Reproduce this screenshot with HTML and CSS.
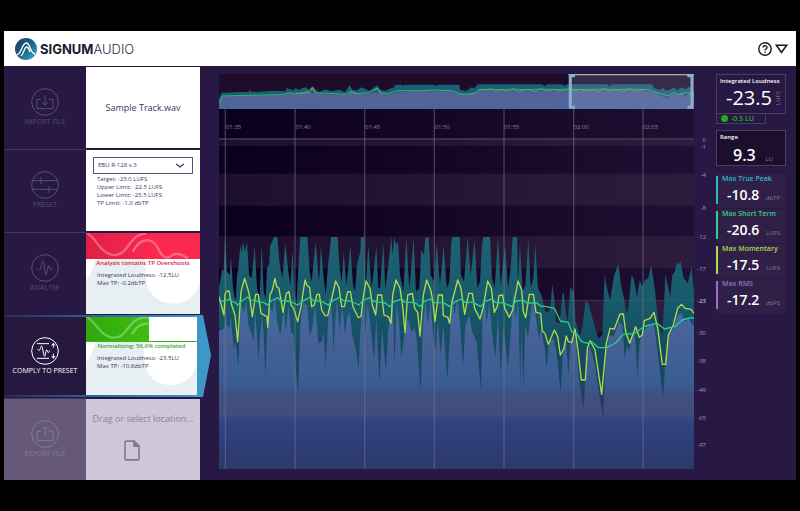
FILE: index.html
```html
<!DOCTYPE html>
<html lang="en">
<head>
<meta charset="utf-8">
<meta name="viewport" content="width=device-width, initial-scale=1">
<title>Signum Audio</title>
<link rel="stylesheet" href="styles.css">
</head>
<body>
<div class="app">
  <header class="header">
    <div class="brand">
      <svg class="brand-mark" viewBox="0 0 66 66" aria-hidden="true">
        <defs><linearGradient id="mark" x1="0" y1="0" x2="1" y2="1"><stop offset="0" stop-color="#173f63"/><stop offset=".5" stop-color="#1c5f88"/><stop offset="1" stop-color="#45b5cd"/></linearGradient></defs>
        <circle cx="33" cy="33" r="33" fill="url(#mark)"/>
        <path d="M5 50C20 50 20 15 34 15C46 15 44 44 60 48" fill="none" stroke="#fff" stroke-width="4"/>
        <path d="M17 54C27 50 27 27 35 27C41 27 42 36 45 42" fill="none" stroke="#fff" stroke-width="4"/>
      </svg>
      <span class="brand-name"><b>SIGNUM</b>AUDIO</span>
    </div>
    <div class="header-actions">
      <button class="icon-button" type="button" aria-label="Help"><svg class="help-icon" viewBox="0 0 14 14"><circle cx="7" cy="7" r="6.2"/><path d="M5 5.6C5 3.2 9 3.2 9 5.5C9 7 7 7 7 8.6M7 9.7V11"/></svg></button>
      <button class="icon-button" type="button" aria-label="Menu"><svg class="menu-icon" viewBox="0 0 12 9"><path d="M1.2 1H10.8L6 7.6Z"/></svg></button>
    </div>
  </header>

  <main class="main">
    <section class="steps">
      <div class="step">
        <button class="step-button" type="button">
          <svg class="step-icon" viewBox="0 0 84 84"><circle cx="42" cy="42" r="40"/><path d="M30 34H18V62H66V34H54M42 22V51M33 42L42 51L51 42"/></svg>
          <span>IMPORT FILE</span>
        </button>
        <div class="card card-file">Sample Track.wav</div>
      </div>

      <div class="step">
        <button class="step-button" type="button">
          <svg class="step-icon" viewBox="0 0 84 84"><circle cx="42" cy="42" r="40"/><path d="M4 29H80M4 55H80M30 19V39M54 45V65"/></svg>
          <span>PRESET</span>
        </button>
        <div class="card card-preset">
          <div class="select-wrap">
            <select class="select" aria-label="Preset"><option>EBU R-128 v.3</option></select>
            <svg class="chevron" viewBox="0 0 10 5" aria-hidden="true"><path d="M1 1Q4 3.2 5 4Q6 3.2 9 1"/></svg>
          </div>
          <p class="lines">Target: -23.0 LUFS<br>Upper Limit: -22.5 LUFS<br>Lower Limit: -23.5 LUFS<br>TP Limit: -1.0 dbTP</p>
        </div>
      </div>

      <div class="step">
        <button class="step-button" type="button">
          <svg class="step-icon" viewBox="0 0 84 84"><circle cx="42" cy="42" r="40"/><path d="M20 44C24 50 27 50 29 42C34 16 36 14 39 30L42 53C44 68 46 68 49 50C52 30 54 30 57 44C59 51 61 48 63 42"/></svg>
          <span>ANALYSE</span>
        </button>
        <div class="card card-status">
          <svg class="swirl" viewBox="0 0 342 243" preserveAspectRatio="none" aria-hidden="true"><path d="M0 0H342V243H0Z" fill="#e7eff3"/><path d="M0 0H34C34 80 20 125 0 140ZM170 0H342V150C325 195 300 212 262 212C215 212 180 180 180 130Z" fill="#fff"/></svg>
          <svg class="banner banner-error" viewBox="0 0 342 78" preserveAspectRatio="none" aria-hidden="true"><path d="M2 0C28 10 44 66 86 66C130 66 126 4 180 2M140 56C156 30 168 20 188 22C222 28 214 72 246 74C262 68 264 50 306 76"/></svg>
          <p class="status status-error">Analysis contains TP Overshoots</p>
          <p class="lines">Integrated Loudness: -12.5LU<br>Max TP: -0.2dbTP</p>
        </div>
      </div>

      <div class="step step-active">
        <button class="step-button" type="button" aria-current="step">
          <svg class="step-icon" viewBox="0 0 84 84"><circle cx="42" cy="42" r="40"/><path d="M18 20H54M18 64H54M20 36C24 42 26 42 28 34C31 24 33 24 35 36L38 50C40 62 42 60 44 48C46 36 48 36 50 44C51 48 54 48 56 40M67 20V32M62 26L67 19L72 26M67 50V63M62 57L67 64L72 57"/></svg>
          <span>COMPLY TO PRESET</span>
        </button>
        <div class="card card-status">
          <svg class="swirl" viewBox="0 0 342 243" preserveAspectRatio="none" aria-hidden="true"><path d="M0 0H342V243H0Z" fill="#e7eff3"/><path d="M0 0H34C34 80 20 125 0 140ZM170 0H342V150C325 195 300 212 262 212C215 212 180 180 180 130Z" fill="#fff"/></svg>
          <div class="progress" role="progressbar" aria-label="Normalising" aria-valuenow="56.6" aria-valuemin="0" aria-valuemax="100">
            <div class="progress-fill" style="width:56.6%"><svg class="banner" viewBox="0 0 192 72" preserveAspectRatio="none" aria-hidden="true"><path d="M2 0C28 10 44 62 86 62C130 62 126 4 180 2L192 2M140 52C156 26 168 20 192 19"/></svg></div>
          </div>
          <p class="status status-ok">Normalising: 56.6% completed</p>
          <p class="lines">Integrated Loudness: -23.5LU<br>Max TP: -10.8dbTP</p>
        </div>
      </div>

      <div class="step step-disabled">
        <button class="step-button" type="button">
          <svg class="step-icon" viewBox="0 0 84 84"><circle cx="42" cy="42" r="40"/><path d="M30 34H18V62H66V34H54M42 48V19M33 28L42 19L51 28"/></svg>
          <span>EXPORT FILE</span>
        </button>
        <div class="card card-export">
          <span>Drag or select location...</span>
          <svg class="doc-icon" viewBox="0 0 48 62" aria-hidden="true"><path d="M8 3H30L45 18V54Q45 59 40 59H8Q3 59 3 54V8Q3 3 8 3Z"/><path d="M30 3V18H45Z" fill="#85799b"/></svg>
        </div>
      </div>
    </section>

    <section class="analysis">
      <div class="graph">
        <svg class="overview" viewBox="0 30 1425 105" preserveAspectRatio="none" role="img" aria-label="Track overview">
          <defs><linearGradient id="ovb" x1="0" y1="0" x2="0" y2="1"><stop offset="0" stop-color="#54619b"/><stop offset="1" stop-color="#4d6799"/></linearGradient></defs>
          <path d="M0 30H1425V135H0Z" fill="#1d0d2b"/>
          <path fill="#176075" d="M0 135V104L8 86L60 84L88 84L92 78L98 84L140 82L160 80L200 82L202 72L214 76L222 79L230 72L240 78L250 72L262 70L270 80L280 66L292 78L300 84L320 76L336 82L360 77L378 84L384 76L392 64L400 77L415 79L426 70L440 76L452 80L466 70L476 64L484 78L500 80L512 74L526 70L528 62H548L552 66L556 62H645L650 66L655 62H720L724 78L744 80L756 70L764 73L772 66L776 61H970L976 67L984 61H1030L1036 65L1044 61H1166L1171 68L1178 61H1298L1306 72L1322 78L1332 72L1342 80L1356 76L1362 70L1376 78L1386 70L1400 76L1410 68L1425 82V135Z"/>
          <path fill="url(#ovb)" d="M0 135V110L14 97L190 93L215 88L240 92L260 85L300 90L380 92L400 88L440 91L480 84L500 92L560 82L700 82L730 91L770 83L790 80L1040 80L1290 80L1315 90L1346 106L1354 92L1390 89L1400 102L1408 87L1425 92V135Z"/>
          <path class="trace trace-thin" stroke="#42ae67" d="M2 118L10 96L80 94L190 92L215 86L225 90L252 88L262 83L270 88L280 70L288 86L300 87L330 88L380 91L396 82L410 89L450 86L474 72L486 88L510 88L535 80L560 80L610 80L640 78L700 80L724 90L750 91L770 88L782 75L800 79L816 76L830 82L846 76L862 81L880 76L900 82L926 76L946 82L966 75L984 81L1006 76L1026 81L1046 76L1066 81L1084 76L1100 81L1124 77L1140 82L1156 75L1170 81L1190 76L1210 82L1230 76L1254 82L1276 76L1292 78L1310 85L1348 95L1362 86L1376 91L1400 86L1425 88"/>
          <path class="trace trace-thin" stroke="#91b83e" opacity=".65" d="M230 88L260 86L280 72L290 88M390 90L400 84L412 90M464 80L476 74L488 86M780 78L816 75L846 78L880 75L926 77L966 75L1006 77L1046 75L1084 77L1124 76L1156 75L1190 77L1230 75L1276 77"/>
          <path d="M1048 30H1425V135H1048Z" fill="#9aa7cd" opacity=".2"/>
          <path d="M1048 32H1425" stroke="#b0a9b9" stroke-width="4"/>
          <path d="M1068 35H1054V130H1068M1405 35H1419V130H1405" fill="none" stroke="#8baecb" stroke-width="9"/>
        </svg>
        <div class="plot">
          <svg class="plot-art" viewBox="0 -348 1425 1080" preserveAspectRatio="none" role="img" aria-label="Loudness over time">
            <defs>
              <linearGradient id="bg" x1="0" y1="0" x2="1" y2="0"><stop offset="0" stop-color="#0b0020"/><stop offset=".35" stop-color="#120425"/><stop offset="1" stop-color="#1f0f32"/></linearGradient>
              <linearGradient id="teal" gradientUnits="userSpaceOnUse" x1="0" y1="36" x2="0" y2="580"><stop offset="0" stop-color="#1e6373"/><stop offset=".4" stop-color="#16586a"/><stop offset=".6" stop-color="#154c61"/><stop offset="1" stop-color="#203e64"/></linearGradient>
              <linearGradient id="blue" gradientUnits="userSpaceOnUse" x1="0" y1="190" x2="0" y2="732"><stop offset="0" stop-color="#2e6589"/><stop offset=".17" stop-color="#4668a0"/><stop offset=".32" stop-color="#455f94"/><stop offset=".42" stop-color="#3d6095"/><stop offset=".53" stop-color="#385b90"/><stop offset=".6" stop-color="#414f7f"/><stop offset=".69" stop-color="#414d7d"/><stop offset=".75" stop-color="#2e4380"/><stop offset="1" stop-color="#2c396a"/></linearGradient>
            </defs>
            <path d="M0 -348H1425V732H0Z" fill="url(#bg)"/>
            <path fill="#6a5268" opacity=".2" d="M0 -258H1425V-237H0ZM0 -154H1425V-58H0ZM0 34H1425V129H0ZM0 225H1425V320H0Z"/>
            <path stroke="#463a58" stroke-width="5" d="M0 -258H1425"/>
            <g fill="url(#teal)">
              <path transform="translate(-12 0)" d="M10 732V200L15 170L22 130L26 140L30 35L36 140L44 150L48 95L54 190L62 230L66 150L70 130L76 60L80 85L84 50L90 80L96 50L102 150L110 160L119 65L126 190L134 220L140 60L146 200L152 220L156 130L162 120L166 60L172 50L176 36H187L193 110L202 160L211 55L220 140L226 180L233 75L238 190L244 250L250 130L256 36H277L284 140L290 170L302 50L312 170L318 65L326 160L332 210L340 110L345 75L348 36H368L374 130L380 170L386 80L394 180L400 130L406 60L414 180L420 200L426 120L436 80L438 36H447L452 190L460 60L470 190L484 65L490 190L496 190V732Z"/>
              <path transform="translate(483 0)" d="M0 732V190L10 55L16 190L26 110L34 36L38 90L43 36L48 60L54 50L60 150L70 200L79 36L88 190L101 40L108 200L118 190L124 75L132 90L136 40L146 36L152 150L162 170L170 55L180 180L191 60L200 190L208 170L214 50L218 36H239L243 150L252 170L263 36L272 150L284 45L292 190L300 170L306 60L310 36H330L336 160L344 190L354 36L362 180L375 60L384 190L392 130L398 36H411L414 170L420 60L428 200L436 180L445 40L452 190L460 160L466 60L474 190L484 210L490 235L496 262V732Z"/>
              <path transform="translate(978 0)" d="M0 732V262H10L16 250L22 178L28 220L33 290L44 295L52 210L56 200L62 260L68 290L76 185L86 200L92 290L104 330L112 310L120 240L123 225L132 240L145 290L160 340L172 330L175 250L179 150L186 190L195 225L208 150L220 118L228 180L238 225L244 265L250 250L260 148L268 170L276 215L284 165L292 185L300 165L310 160L318 120L328 180L340 290L352 330L356 260L361 150L368 180L376 215L382 150L390 140L396 110L400 120L406 108L416 160L428 175L434 150L440 125L447 200V732Z"/>
            </g>
            <g fill="url(#blue)">
              <path transform="translate(-12 0)" d="M10 732V320L28 310L30 240L36 300L44 310L47 270L52 330L57 370L62 350L70 428L74 310L78 235L86 260L94 230L100 300L108 320L116 345L120 260L126 330L130 408L136 320L141 270L146 330L151 455L156 320L162 240L172 260L180 210L186 290L196 330L206 250L213 320L220 240L228 320L236 330L243 440L250 500L256 300L264 230L276 240L284 330L292 310L300 240L306 300L310 355L320 350L326 320L332 430L338 310L344 200L352 280L355 380L360 300L366 220L374 320L382 240L390 330L396 280L404 260L412 330L422 370L431 430L436 320L444 230L450 340L458 230L466 300L477 405L484 280L493 470L496 440V732Z"/>
              <path transform="translate(483 0)" d="M0 732V440L6 310L18 440L24 320L38 230L44 420L50 230L58 300L64 400L74 320L84 280L94 320L104 310L110 340L122 500L128 310L136 220L144 300L152 220L158 320L166 380L174 290L182 390L190 300L202 465L210 320L216 200L224 270L232 210L240 300L249 430L256 300L268 270L276 320L290 350L303 495L308 260L314 200L320 300L328 230L336 320L346 400L354 270L362 450L370 300L384 430L394 300L400 190L408 290L414 210L421 480L424 300L430 490L436 300L444 340L456 230L464 250L476 340L484 310L490 350L496 380V732Z"/>
              <path transform="translate(978 0)" d="M0 732V380L5 430L12 350L26 340L34 380L47 500L54 370L62 330L70 450L76 360L84 330L92 350L102 460L116 555L124 400L134 360L150 420L164 520L175 580L182 390L192 330L206 335L222 290L232 300L239 400L246 360L252 380L262 325L270 330L277 455L284 350L294 320L310 300L326 295L338 380L354 520L362 400L372 330L386 310L398 270L410 265L420 290L432 280L440 300L447 300V732Z"/>
            </g>
            <path stroke="#7d7290" stroke-width="4" opacity=".5" d="M19 -348V732M228 -348V732M437 -348V732M646 -348V732M855 -348V732M1064 -348V732M1272 -348V732"/>
            <path stroke="#7d7290" stroke-width="3" opacity=".25" d="M0 226H1425"/>
            <g class="trace" stroke="#afdc48">
              <path transform="translate(-12 0)" d="M12 215L27 270L30 207L36 198H42L50 240L60 270L68 350L78 200L89 160L98 190L104 215L112 275L122 208H130L138 265L150 272L156 275L158 307L163 240L165 210L172 195L180 160L185 185L192 190L204 262L214 205L222 200L228 240L236 250L248 290L258 245L270 165L275 180L284 188L290 245L298 240L306 208H313L320 255L330 272H338L347 235L362 168L372 188L380 245H388L398 200H406L414 245L430 278L438 275L445 215L453 168L465 190L472 240L482 270L488 210H496"/>
              <path transform="translate(483 0)" d="M0 210H5L12 270L25 275L33 295L38 210L48 165L60 190L68 245L75 322L83 210L97 205L104 250L113 262L120 333L130 210L140 165L152 195L158 225L165 290L175 210H187L190 272L203 277L209 295L215 235L233 165L243 190L254 268L266 205H277L284 250L300 282L310 245L323 168L334 190L343 262L352 245L357 212L368 210L374 250L388 277L398 255L414 168L425 195L430 260L437 278L448 208H460L468 262L482 265L487 318L495 325"/>
              <path transform="translate(978 0)" d="M0 325L10 358L28 315L38 335L46 390L57 370L64 333L70 350L80 353L90 312L100 385L109 465H121L127 370L135 347L150 375L170 508L184 355L195 310L208 312L225 267H235L242 320L254 355L272 305L283 337L292 330L298 287L315 280L327 262L338 310L352 418H362L370 330L385 300L398 250L410 238L420 250L438 253L447 265"/>
            </g>
            <g class="trace" stroke="#2bd085">
              <path transform="translate(-12 0)" d="M12 230L34 226L42 222L50 230L60 232L68 240L80 228L98 216L106 226H120L132 232H146L158 240L168 228L188 218L196 226L216 228L232 232L248 240L260 230L284 217L294 226L312 228L326 232L340 240L352 228L374 217L384 226L404 228L420 234L432 240L444 226L466 218L474 228L495 232"/>
              <path transform="translate(483 0)" d="M0 232L16 234L30 245L42 230L66 222L74 232H98L110 236L120 245L132 230L152 222L164 233H190L210 245L222 232L244 222L254 232H280L302 245L314 230L336 222L346 232L372 234L396 245L408 228L430 226L440 234H470L484 244H495"/>
              <path transform="translate(978 0)" d="M0 244L28 250L46 288L70 292L80 320L94 325L110 350L128 355L140 350L160 368H184L212 354L234 328L268 326L296 305L320 298L338 296L358 312L390 304L412 285L438 278L447 280"/>
            </g>
          </svg>
          <div class="times"><span>01:35</span><span>01:40</span><span>01:45</span><span>01:50</span><span>01:55</span><span>02:00</span><span>02:05</span></div>
        </div>
      </div>
      <svg class="scale" viewBox="0 0 12 395" role="img" aria-label="Level scale">
        <text x="12" y="68">0</text><text x="12" y="75">-1</text><text x="12" y="103">-4</text><text x="12" y="136">-8</text><text x="12" y="165">-12</text><text x="12" y="197">-17</text><text x="12" y="229" class="scale-target">-23</text><text x="12" y="261">-30</text><text x="12" y="289">-38</text><text x="12" y="318">-49</text><text x="12" y="346">-65</text><text x="12" y="373">-97</text>
      </svg>
    </section>

    <aside class="meters">
      <div class="meter-main">
        <div class="box box-loudness"><h2>Integrated Loudness</h2><div class="reading"><strong>-23.5</strong><span class="unit-vertical">LUFS</span></div></div>
        <div class="delta"><i class="dot"></i>-0.5 LU</div>
      </div>
      <div class="box box-range"><h2>Range</h2><div class="reading"><strong>9.3</strong><span>LU</span></div></div>
      <div class="meter-list">
        <div class="meter meter-peak"><h2>Max True Peak</h2><div class="reading"><strong>-10.8</strong><span>dbTP</span></div></div>
        <div class="meter meter-short"><h2>Max Short Term</h2><div class="reading"><strong>-20.6</strong><span>LUFS</span></div></div>
        <div class="meter meter-momentary"><h2>Max Momentary</h2><div class="reading"><strong>-17.5</strong><span>LUFS</span></div></div>
        <div class="meter meter-rms"><h2>Max RMS</h2><div class="reading"><strong>-17.2</strong><span>dbFS</span></div></div>
      </div>
    </aside>
  </main>
</div>
</body>
</html>
```
FILE: styles.css
```css
* { box-sizing: border-box; }

body {
  margin: 0;
  padding: 31px 4px;
  background: #000;
  color: #40365c;
  font-family: "Open Sans", "Noto Sans", sans-serif;
}

h2, p { margin: 0; }
button { font: inherit; color: inherit; background: none; border: 0; padding: 0; cursor: pointer; }
svg { display: block; }

.app { background: #271844; }

.header {
  display: flex;
  align-items: center;
  justify-content: space-between;
  height: 35px;
  padding: 0 8px 0 11px;
  background: #fff;
}
.brand { display: flex; align-items: center; gap: 3px; }
.brand-mark { width: 22px; height: 22px; }
.brand-name { font-family: Inter, "Open Sans", sans-serif; font-size: 13px; line-height: 16px; font-weight: 300; color: #33293f; }
.brand-name b { font-weight: 700; color: #211833; }
.header-actions { display: flex; align-items: center; gap: 3px; }
.icon-button svg { fill: none; stroke: #1b1428; stroke-width: 1.4; }
.help-icon { width: 14px; height: 14px; }
.menu-icon { width: 13px; height: 10px; }

.main { display: flex; padding-top: 1px; }

/* Workflow steps */
.steps { flex: none; width: 196px; display: flex; flex-direction: column; gap: 2px; }
.step { position: relative; display: grid; grid-template-columns: 82px 1fr; min-height: 81px; }
.step + .step::before {
  content: "";
  position: absolute;
  left: 0;
  top: -1px;
  width: 82px;
  height: 1px;
  background: #443660;
}
.step-button {
  display: flex;
  flex-direction: column;
  align-items: center;
  padding-top: 21px;
  font-size: 7px;
  line-height: 12px;
  color: #5b4e72;
  white-space: nowrap;
}
.step-icon { width: 28px; height: 28px; fill: none; stroke: currentColor; stroke-width: 3; }

.card { position: relative; background: #fff; font-size: 9px; }
.card-file { display: grid; place-items: center; }
.card-preset { padding: 7px 7px 0; }
.select-wrap { position: relative; }
.select {
  display: block;
  width: 100%;
  height: 17px;
  padding: 0 4px;
  border: 1px solid #5b5175;
  border-radius: 0;
  background: #fff;
  color: #40365c;
  font: 6px/15px "Open Sans", sans-serif;
  appearance: none;
}
.chevron { position: absolute; right: 8px; top: 6px; width: 10px; height: 5px; fill: none; stroke: #40365c; stroke-width: 1.3; pointer-events: none; }
.lines { position: relative; font-size: 6px; line-height: 8px; white-space: nowrap; }
.card-preset .lines { padding: 1px 4px; }
.card-status .lines { padding: 3px 11px; }
.status { position: relative; text-align: center; font-size: 6px; line-height: 9px; font-weight: 600; white-space: nowrap; }
.status-error { color: #d8203f; }
.status-ok { color: #33a71c; }
.swirl { position: absolute; inset: 0; width: 100%; height: 100%; }
.banner { position: relative; width: 100%; height: 26px; fill: none; stroke: #fff; stroke-opacity: .3; stroke-width: 7; }
.banner-error { background: linear-gradient(90deg, #e01f45, #fb2850 60%); }

.progress { position: relative; height: 25px; background: #fff; border-bottom: 1px solid #35bb13; }
.progress-fill { height: 24px; background: linear-gradient(90deg, #2fa80d, #3fbe10); }
.progress-fill .banner { height: 24px; }

.step-active { padding: 1px 3px 2px 0; background: linear-gradient(90deg, #2b2a57, #2b6a9e 50%, #3f97c9); }
.step-active.step::before { width: 100%; background: linear-gradient(90deg, #2b2a57, #2b6a9e 50%, #3f97c9); }
.step-active::after {
  content: "";
  position: absolute;
  left: 100%;
  top: -1px;
  bottom: 0;
  width: 11px;
  background: #3f97c9;
  clip-path: polygon(0 0, 27% 0, 100% 49%, 27% 100%, 0 100%);
}
.step-active .step-button { background: #27183f; color: #fff; padding-top: 20px; }
.step-disabled .step-button { background: #655878; color: #85799b; }
.card-export { display: flex; flex-direction: column; align-items: center; gap: 14px; padding-top: 13px; background: #cdc7d7; color: #8c82a3; line-height: 14px; white-space: nowrap; }
.doc-icon { width: 16px; height: 21px; margin-right: 22px; fill: none; stroke: #85799b; stroke-width: 5; }

/* Graphs */
.analysis { flex: 1; min-width: 0; display: flex; padding: 7px 10px 11px 19px; }
.graph { flex: 1; min-width: 0; }
.overview { width: 100%; height: 35px; }
.plot { position: relative; }
.plot-art { width: 100%; height: 360px; }
.trace { fill: none; stroke-width: 4; stroke-linejoin: round; }
.trace-thin { stroke-width: 3; }
.times { position: absolute; left: 7px; right: 0; top: 14px; display: flex; font-size: 6px; line-height: 9px; color: #8a8299; }
.times span { flex: 0 0 14.85%; }
.scale { flex: none; width: 12px; height: 395px; overflow: visible; fill: #a69db3; font-size: 6px; text-anchor: end; }
.scale-target { fill: #e3deea; }

/* Readings */
.meters { flex: none; width: 80px; padding: 7px 10px 0 0; color: #fff; }
.meters h2 { font-size: 6px; line-height: 8px; font-weight: 600; white-space: nowrap; }
.reading { display: flex; align-items: baseline; justify-content: space-between; font-size: 6px; color: #847a95; }
.reading strong { color: #fff; font-weight: 600; }
.box { border: 1px solid #4a3d5e; padding: 2px 3px; }
.box-loudness { height: 40px; }
.box-loudness .reading { align-items: center; padding-left: 6px; }
.box-loudness strong { font-size: 20px; line-height: 26px; font-weight: 400; }
.unit-vertical { writing-mode: vertical-rl; transform: rotate(180deg); }
.delta { display: flex; align-items: center; gap: 3px; width: 50px; height: 11px; margin-top: -1px; padding-left: 4px; border: 1px solid #4a3d5e; color: #2cab20; font-size: 7px; font-weight: 600; }
.dot { width: 7px; height: 7px; border-radius: 50%; background: #25ad16; }
.box-range { height: 36px; margin-top: 6px; background: #1c0e2c; }
.box-range .reading { padding: 0 9px 0 13px; }
.box-range strong { font-size: 16px; line-height: 28px; }
.meter-list { display: grid; gap: 1px; margin-top: 8px; }
.meter { position: relative; height: 34px; padding-left: 6px; background: #302047; }
.meter::before { content: ""; position: absolute; left: 0; top: 2px; width: 2px; height: 28px; background: currentColor; }
.meter h2 { font-size: 7px; line-height: 9px; }
.meter .reading { padding: 0 6px 0 5px; }
.meter strong { font-size: 14px; line-height: 24px; }
.meter-peak { color: #2bb7c3; }
.meter-short { color: #32d28b; }
.meter-momentary { color: #b1d94b; }
.meter-rms { color: #9c70bd; }
```
